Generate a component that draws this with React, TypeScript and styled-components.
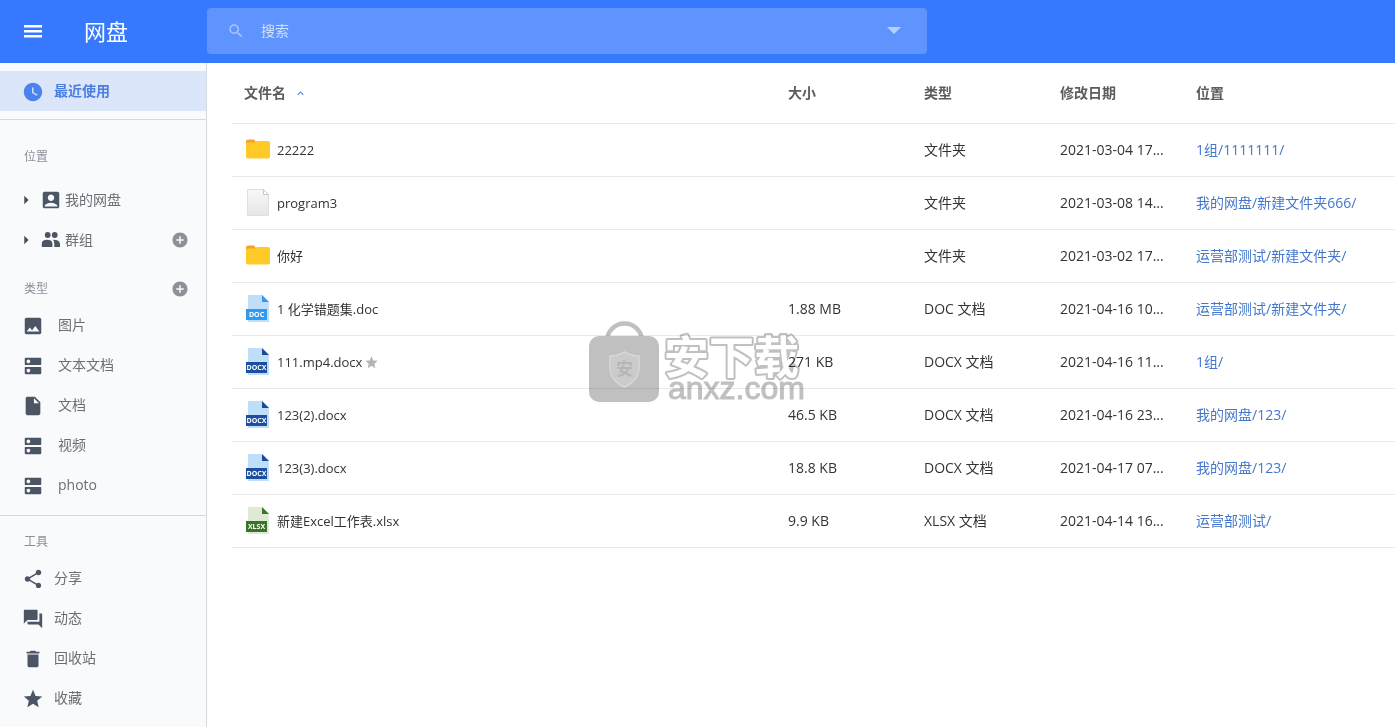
import React from 'react';
import styled, { createGlobalStyle, css } from 'styled-components';
import {
  MdSearch, MdWatchLater, MdAccountBox, MdAddCircle, MdPhoto, MdDns,
  MdInsertDriveFile, MdShare, MdQuestionAnswer, MdDelete, MdStar, MdArrowRight, MdKeyboardArrowUp,
} from 'react-icons/md';

const GlobalStyle = createGlobalStyle`
  *, *::before, *::after { box-sizing: border-box; }
  body {
    margin: 0;
    background: #fff;
    color: #333;
    font-family: 'Open Sans', 'Noto Sans CJK SC', sans-serif;
    font-size: 14px;
    line-height: 20px;
  }
  button, input { font: inherit; color: inherit; }
  a { color: inherit; text-decoration: none; }
  svg { display: block; flex: none; }
`;

const Page = styled.div`
  display: flex;
  flex-direction: column;
  min-height: 100vh;
`;

const Header = styled.header`
  display: flex;
  align-items: center;
  height: 63px;
  padding-bottom: 2px;
  background: #3679fe;
  color: #fff;
`;

const Brand = styled.div`
  display: flex;
  align-items: center;
  flex: none;
  gap: 39px;
  width: 207px;
  padding-left: 21px;
`;

const IconButton = styled.button`
  display: flex;
  align-items: center;
  justify-content: center;
  padding: 0;
  border: 0;
  background: none;
  cursor: pointer;
`;

const BrandName = styled.h1`
  margin: 0;
  font-size: 22px;
  line-height: 32px;
  font-weight: 400;
`;

const SearchForm = styled.form`
  display: flex;
  align-items: center;
  flex: 0 1 720px;
  gap: 16px;
  height: 46px;
  padding: 0 26px 0 20px;
  border-radius: 4px;
  background: #5f94fe;
  color: #a9c8ff;
`;

const SearchInput = styled.input`
  flex: 1;
  min-width: 0;
  padding: 0;
  border: 0;
  outline: 0;
  background: none;
  color: #fff;
  &::placeholder { color: #cfe0ff; opacity: 1; }
`;

const Triangle = styled.span`
  border: 7px solid transparent;
  border-top-color: #b3d0ff;
  border-bottom-width: 0;
`;

const Body = styled.div`
  display: flex;
  flex: 1;
`;

const Sidebar = styled.nav`
  flex: none;
  width: 207px;
  padding: 8px 0;
  border-right: 1px solid #d5d9de;
  background: #f8fafc;
`;

const List = styled.ul`
  margin: 0;
  padding: 0;
  list-style: none;
`;

const Rule = styled.hr<{ $top: number }>`
  height: 1px;
  margin: ${p => p.$top}px 0 0;
  border: 0;
  background: #d5d9de;
`;

const GroupTitle = styled.div<{ $top: number; $bottom: number }>`
  display: flex;
  align-items: center;
  justify-content: space-between;
  margin: ${p => p.$top}px 0 ${p => p.$bottom}px;
  padding: 0 17px 0 24px;
`;

const GroupName = styled.h2`
  margin: 0;
  color: #8a9199;
  font-size: 12px;
  line-height: 20px;
  font-weight: 400;
`;

const Item = styled.li<{ $active?: boolean }>`
  display: flex;
  align-items: center;
  height: 40px;
  padding: 0 17px 0 16px;
  color: #6b6f75;
  ${p => p.$active && css`
    background: #dbe6fa;
    color: #4a7fe0;
    font-weight: 700;
  `}
`;

const ItemLink = styled.a<{ $gap: number; $nested?: boolean; $active?: boolean }>`
  display: flex;
  flex: 1;
  align-items: center;
  gap: ${p => p.$gap}px;
  padding-left: ${p => (p.$nested ? 4 : 6)}px;
  svg {
    margin-top: ${p => (p.$nested ? 0 : 2)}px;
    color: ${p => (p.$active ? '#4b82ee' : '#4b5563')};
  }
`;

const AddButton = styled(IconButton)`
  color: #8c9198;
`;

const Toggle = styled(IconButton)`
  color: #3f4a56;
`;

const Main = styled.main`
  position: relative;
  flex: 1;
  min-width: 0;
  padding-left: 25px;
`;

const Table = styled.table`
  width: 100%;
  table-layout: fixed;
  border-collapse: separate;
  border-spacing: 0;
`;

const Col = styled.col<{ $w?: number }>`
  ${p => p.$w && css`width: ${p.$w}px;`}
`;

const cell = css`
  padding: 0 12px;
  border-bottom: 1px solid #eaeaea;
  text-align: left;
  white-space: nowrap;
`;

const HeadCell = styled.th`
  ${cell}
  height: 61px;
  color: #5c5c5c;
  font-weight: 700;
`;

const SortButton = styled(IconButton)`
  gap: 8px;
  font-weight: 700;
  svg { color: #5a7fd8; }
`;

const Cell = styled.td`
  ${cell}
  height: 53px;
`;

const FileCell = styled.div`
  display: flex;
  align-items: center;
  gap: 2px;
  font-size: 13px;
`;

const FileLink = styled.a`
  display: flex;
  align-items: center;
  gap: 5px;
`;

const PathLink = styled.a`
  color: #4477cc;
`;

const Watermark = styled.svg`
  position: absolute;
  top: 258px;
  left: 381px;
  mix-blend-mode: multiply;
  pointer-events: none;
`;

type Kind = 'folder' | 'blank' | 'doc' | 'docx' | 'xlsx';

const badgeColors: Record<string, { page: string; band: string; fold: string }> = {
  doc: { page: '#bfdefa', band: '#2f9bf0', fold: '#2f9bf0' },
  docx: { page: '#bfdefa', band: '#1c4fa0', fold: '#1c4a96' },
  xlsx: { page: '#dcebd2', band: '#3a7427', fold: '#3a7427' },
};

function MenuIcon() {
  return (
    <svg width="24" height="24" viewBox="0 0 24 24" aria-hidden="true">
      <path d="M3 6h18v2.500H3zM3 11h18v2.500H3zM3 16h18v2.500H3z" fill="currentColor" />
    </svg>
  );
}

function PeopleIcon() {
  return (
    <svg width="22" height="22" viewBox="0 0 22 22" fill="currentColor" aria-hidden="true">
      <circle cx="7.700" cy="6" r="2.900" />
      <circle cx="14.700" cy="6" r="2.900" />
      <path d="M1.800 18v-3q0-4.200 5.300-4.200T12.400 15v3z" />
      <path d="M13 10.800q7 0 7 4.400V18h-5.700v-3q0-2.600-1.300-4.200z" />
    </svg>
  );
}

function FileIcon({ kind }: { kind: Kind }) {
  if (kind === 'folder') {
    return (
      <svg width="28" height="28" viewBox="0 0 28 28" aria-hidden="true">
        <path d="M2 9V5.500q0-2 2-2h5.500q1 0 1.500 1l1 2V9z" fill="#f3a32b" />
        <path d="M2 8q0-1.500 2-1.500h6.500q1 0 1.500-.8.400-.7 1.500-.7H24q2 0 2 2v13.500q0 2-2 2H4q-2 0-2-2z" fill="#ffca28" />
      </svg>
    );
  }
  if (kind === 'blank') {
    return (
      <svg width="28" height="28" viewBox="0 0 28 28" aria-hidden="true">
        <defs>
          <linearGradient id="sheet" x1="0" y1="0" x2="0" y2="1">
            <stop offset="0" stopColor="#f8f8f8" />
            <stop offset="1" stopColor="#e6e6e6" />
          </linearGradient>
        </defs>
        <path d="M3.500.500h16l5 5v21h-21z" fill="url(#sheet)" stroke="#dfdfdf" />
        <path d="M19.500.500v5h5z" fill="#fff" stroke="#c9c9c9" strokeLinejoin="round" />
      </svg>
    );
  }
  const c = badgeColors[kind];
  return (
    <svg width="28" height="28" viewBox="0 0 28 28" aria-hidden="true">
      <path d="M4 0h14l7 7v20H4z" fill={c.page} />
      <path d="M18 0l7 7h-7z" fill={c.fold} />
      <rect x="2" y="14" width="21" height="11" fill={c.band} />
      <text x="12.500" y="22" textAnchor="middle" fontSize="7" fontWeight="700" fill="#fff">
        {kind.toUpperCase()}
      </text>
    </svg>
  );
}

const categories = [
  { name: '图片', Icon: MdPhoto },
  { name: '文本文档', Icon: MdDns },
  { name: '文档', Icon: MdInsertDriveFile },
  { name: '视频', Icon: MdDns },
  { name: 'photo', Icon: MdDns },
];

const tools = [
  { name: '分享', Icon: MdShare },
  { name: '动态', Icon: MdQuestionAnswer },
  { name: '回收站', Icon: MdDelete },
  { name: '收藏', Icon: MdStar },
];

const files: { name: string; kind: Kind; size: string; type: string; date: string; path: string; starred?: boolean }[] = [
  { name: '22222', kind: 'folder', size: '', type: '文件夹', date: '2021-03-04 17...', path: '1组/1111111/' },
  { name: 'program3', kind: 'blank', size: '', type: '文件夹', date: '2021-03-08 14...', path: '我的网盘/新建文件夹666/' },
  { name: '你好', kind: 'folder', size: '', type: '文件夹', date: '2021-03-02 17...', path: '运营部测试/新建文件夹/' },
  { name: '1 化学错题集.doc', kind: 'doc', size: '1.88 MB', type: 'DOC 文档', date: '2021-04-16 10...', path: '运营部测试/新建文件夹/' },
  { name: '111.mp4.docx', kind: 'docx', size: '271 KB', type: 'DOCX 文档', date: '2021-04-16 11...', path: '1组/', starred: true },
  { name: '123(2).docx', kind: 'docx', size: '46.5 KB', type: 'DOCX 文档', date: '2021-04-16 23...', path: '我的网盘/123/' },
  { name: '123(3).docx', kind: 'docx', size: '18.8 KB', type: 'DOCX 文档', date: '2021-04-17 07...', path: '我的网盘/123/' },
  { name: '新建Excel工作表.xlsx', kind: 'xlsx', size: '9.9 KB', type: 'XLSX 文档', date: '2021-04-14 16...', path: '运营部测试/' },
];

function SiteMark() {
  return (
    <Watermark width="218" height="86" viewBox="0 0 218 86" aria-hidden="true">
      <path d="M19 20a17.500 17.500 0 0 1 35 0" fill="none" stroke="#c0c0c0" strokeWidth="4.500" />
      <rect x="1" y="15" width="70" height="66" rx="10" fill="#c0c0c0" />
      <path d="M36.500 31q7 4 14.500 4v12q0 12-14.500 19Q22 59 22 47V35q7.500 0 14.500-4z" fill="#cbcbcb" stroke="#d8d8d8" strokeWidth="1.500" />
      <text x="36.500" y="54" textAnchor="middle" fontSize="17" fontWeight="700" fill="#b6b6b6">安</text>
      <text
        x="76" y="53" fontSize="45" fontWeight="700" fill="#fff"
        stroke="#c0c0c0" strokeWidth="4" strokeLinejoin="round" paintOrder="stroke"
      >
        安下载
      </text>
      <text x="80" y="78" fontFamily="'Liberation Sans', sans-serif" fontSize="32" fill="#c0c0c0" stroke="#c0c0c0">anxz.com</text>
    </Watermark>
  );
}

export default function App() {
  return (
    <Page>
      <GlobalStyle />
      <Header>
        <Brand>
          <IconButton type="button" aria-label="菜单"><MenuIcon /></IconButton>
          <BrandName>网盘</BrandName>
        </Brand>
        <SearchForm role="search">
          <MdSearch size={18} />
          <SearchInput type="search" aria-label="搜索" placeholder="搜索" />
          <IconButton type="button" aria-label="搜索选项"><Triangle /></IconButton>
        </SearchForm>
      </Header>
      <Body>
        <Sidebar>
          <List>
            <Item $active>
              <ItemLink href="#recent" $active $gap={10}><MdWatchLater size={22} />最近使用</ItemLink>
            </Item>
          </List>
          <Rule $top={8} />
          <GroupTitle $top={27} $bottom={13}><GroupName>位置</GroupName></GroupTitle>
          <List>
            <Item>
              <Toggle type="button" aria-label="展开我的网盘"><MdArrowRight size={20} /></Toggle>
              <ItemLink href="#mine" $nested $gap={3}><MdAccountBox size={22} />我的网盘</ItemLink>
            </Item>
            <Item>
              <Toggle type="button" aria-label="展开群组"><MdArrowRight size={20} /></Toggle>
              <ItemLink href="#groups" $nested $gap={3}><PeopleIcon />群组</ItemLink>
              <AddButton type="button" aria-label="添加群组"><MdAddCircle size={18} /></AddButton>
            </Item>
          </List>
          <GroupTitle $top={19} $bottom={6}>
            <GroupName>类型</GroupName>
            <AddButton type="button" aria-label="添加类型"><MdAddCircle size={18} /></AddButton>
          </GroupTitle>
          <List>
            {categories.map(({ name, Icon }) => (
              <Item key={name}>
                <ItemLink href={`#${name}`} $gap={14}><Icon size={22} />{name}</ItemLink>
              </Item>
            ))}
          </List>
          <Rule $top={10} />
          <GroupTitle $top={16} $bottom={6}><GroupName>工具</GroupName></GroupTitle>
          <List>
            {tools.map(({ name, Icon }) => (
              <Item key={name}>
                <ItemLink href={`#${name}`} $gap={10}><Icon size={22} />{name}</ItemLink>
              </Item>
            ))}
          </List>
        </Sidebar>
        <Main>
          <Table>
            <colgroup>
              <Col />
              <Col $w={136} />
              <Col $w={136} />
              <Col $w={136} />
              <Col $w={211} />
            </colgroup>
            <thead>
              <tr>
                <HeadCell scope="col" aria-sort="ascending">
                  <SortButton type="button">文件名<MdKeyboardArrowUp size={13} /></SortButton>
                </HeadCell>
                <HeadCell scope="col">大小</HeadCell>
                <HeadCell scope="col">类型</HeadCell>
                <HeadCell scope="col">修改日期</HeadCell>
                <HeadCell scope="col">位置</HeadCell>
              </tr>
            </thead>
            <tbody>
              {files.map(f => (
                <tr key={f.name}>
                  <Cell>
                    <FileCell>
                      <FileLink href={`#${f.name}`}><FileIcon kind={f.kind} />{f.name}</FileLink>
                      {f.starred && <MdStar size={15} color="#b5b5b5" />}
                    </FileCell>
                  </Cell>
                  <Cell>{f.size}</Cell>
                  <Cell>{f.type}</Cell>
                  <Cell>{f.date}</Cell>
                  <Cell><PathLink href={`#${f.path}`}>{f.path}</PathLink></Cell>
                </tr>
              ))}
            </tbody>
          </Table>
          <SiteMark />
        </Main>
      </Body>
    </Page>
  );
}
